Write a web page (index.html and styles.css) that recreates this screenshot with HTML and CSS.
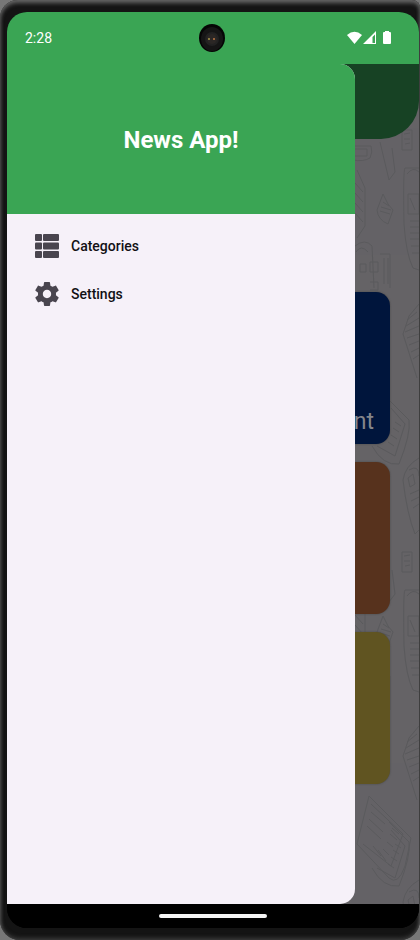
FILE: index.html
```html
<!DOCTYPE html>
<html lang="en">
<head>
<meta charset="utf-8">
<meta name="viewport" content="width=device-width, initial-scale=1">
<title>News App</title>
<link rel="stylesheet" href="styles.css">
</head>
<body>
<div class="phone">
  <div class="screen">
    <header class="status">
      <time class="clock">2:28</time>
      <span class="camera"><svg viewBox="0 0 26 28"><ellipse cx="13" cy="14" rx="13" ry="14" fill="#050505"/><ellipse cx="13" cy="15" rx="11" ry="12" fill="#151515"/><circle cx="13" cy="15" r="7" fill="#222"/><circle cx="13" cy="15" r="5" fill="#2b2725"/><circle cx="10" cy="15" r="1" fill="#a79a4a"/><circle cx="15" cy="15" r="1" fill="#c07845"/></svg></span>
      <svg class="signals" viewBox="0 0 46 14" fill="#fff">
        <path d="M0 4Q7.500-2.500 15 4L7.500 13Z"/>
        <path fill-rule="evenodd" d="M29 0V13H16ZM28 3.500L25.500 6V12H28Z"/>
        <path d="M37 1H38V0H42V1H43Q44 1 44 2V12Q44 13 43 13H37Q36 13 36 12V2Q36 1 37 1Z"/>
      </svg>
    </header>

    <div class="content">
      <main class="page">
        <svg class="doodles" viewBox="0 0 66 840" preserveAspectRatio="xMaxYMin slice" fill="none" stroke="#505254" stroke-width="1">
          <defs>
            <g id="sheets">
              <path d="M0 82H18Q20 88 17 94Q10 98 0 96M2 85H14V92H2M27 78L36 116L42 108L39 84M49 66H59V86H49ZM51 70L57 69M51 75H57M52 80L57 79M4 106L12 124V162L4 174M2 119L10 128M2 129L10 138M2 139L10 148M2 149L10 158M66 104H52Q50 106 51 160Q53 190 60 204L66 206M54 110Q60 102 66 108M55 130H66V150H55ZM57 134L62 146M57 157H66M57 163H66M57 169H66M57 175H66M58 182H66M59 189H66"/>
              <path d="M30 130L24 146Q25 156 35 160L40 146L35 140L30 130M27 147L37 150M28 143L38 146M30 138L36 142M2 182Q12 174 19 182L21 224M7 200H13V208H7ZM17 198H25V208H17ZM27 190H37V224M31 194V220M35 194V220M17 218H25V226H17M3 188Q8 180 15 188"/>
            </g>
            <g id="papers">
              <path d="M66 240L56 252L50 270L64 314M54 256L64 248M53 262L66 254M52 268L66 262M54 274L66 270M56 281L66 277M58 288L66 284M60 295L66 291M36 336L56 356Q58 370 46 400Q30 402 19 382M38 344L52 360L42 392L24 382M42 358L48 362M40 364L46 368M38 371L44 375M35 378L41 382"/>
              <path d="M66 394Q52 402 50 416Q54 450 62 470L66 466M56 406Q66 400 66 412M55 414L60 410L62 420L57 423ZM57 430L66 426M58 437L66 433M60 444L66 440"/>
            </g>
          </defs>
          <use href="#sheets"/><use href="#papers"/>
          <use href="#sheets" y="422"/>
          <use href="#papers" y="422"/>
          <path d="M16 732L58 774L52 802Q45 822 36 814L4 780ZM18 740L50 770L38 802L10 780M18 748L32 760M16 755L30 768M14 762L28 775M39 764L46 770M37 770L44 776M34 778L40 783M30 785L36 791M25 786L33 797M20 782L28 792"/>
        </svg>
        <div class="appbar"></div>
        <div class="cards">
          <article class="card card-blue">Entertainment</article>
          <article class="card card-brown"></article>
          <article class="card card-olive"></article>
        </div>
      </main>

      <aside class="drawer">
        <h1 class="title">News App!</h1>
        <nav class="menu">
          <a class="item" href="#categories">
            <svg class="icon" viewBox="0 0 24 24" fill="#49454f"><rect width="7" height="7" rx="1"/><rect x="8" width="16" height="7" rx="1"/><rect y="8.500" width="7" height="7" rx="1"/><rect x="8" y="8.500" width="16" height="7" rx="1"/><rect y="17" width="7" height="7" rx="1"/><rect x="8" y="17" width="16" height="7" rx="1"/></svg>
            Categories
          </a>
          <a class="item" href="#settings">
            <svg class="icon" viewBox="2 2 20 20" fill="#49454f"><path d="M19.430 12.980c.04-.32.07-.64.07-.98s-.03-.66-.07-.98l2.110-1.650c.19-.15.24-.42.12-.64l-2-3.460c-.12-.22-.39-.3-.61-.22l-2.490 1c-.52-.4-1.080-.73-1.690-.98l-.38-2.650C14.460 2.180 14.250 2 14 2h-4c-.25 0-.46.18-.49.42l-.38 2.650c-.61.25-1.170.59-1.690.98l-2.490-1c-.23-.09-.49 0-.61.22l-2 3.460c-.13.22-.07.49.12.64l2.110 1.650c-.04.32-.07.65-.07.98s.03.66.07.98l-2.110 1.650c-.19.15-.24.42-.12.64l2 3.460c.12.22.39.3.61.22l2.490-1c.52.4 1.080.73 1.690.98l.38 2.650c.03.24.24.42.49.42h4c.25 0 .46-.18.49-.42l.38-2.650c.61-.25 1.170-.59 1.690-.98l2.490 1c.23.09.49 0 .61-.22l2-3.460c.12-.22.07-.49-.12-.64l-2.110-1.650zM12 15.500c-1.930 0-3.500-1.570-3.500-3.500s1.570-3.500 3.500-3.500 3.500 1.570 3.500 3.500-1.570 3.500-3.500 3.500z"/></svg>
            Settings
          </a>
        </nav>
      </aside>
    </div>

    <footer class="gesture"><span class="handle"></span></footer>
  </div>
</div>
</body>
</html>
```
FILE: styles.css
```css
* { box-sizing: border-box; }

body {
  margin: 0;
  background: #777;
  font-family: Roboto, "Liberation Sans", sans-serif;
}

.phone {
  display: flex;
  min-height: 100vh;
  padding: 12px 1px 12px 7px;
  background: #141414;
  border-radius: 18px 8px 20px 20px;
  box-shadow: inset 0 3px 4px #666, inset 0 -2px 4px #3a3a3a;
}

.screen {
  flex: 1;
  display: flex;
  flex-direction: column;
  overflow: hidden;
  border-radius: 20px;
  background: #000;
}

.status {
  display: grid;
  grid-template-columns: 1fr auto 1fr;
  align-items: center;
  height: 52px;
  padding: 0 26px 0 18px;
  background: #3aa554;
  color: #fff;
}

.clock { font-size: 14px; }

.camera {
  width: 26px;
  height: 28px;
  margin-left: 6px;
}

.camera svg { display: block; }

.signals {
  width: 46px;
  height: 14px;
  justify-self: end;
}

.content {
  position: relative;
  flex: 1;
  display: flex;
}

.page {
  position: relative;
  flex: 1;
  background: #656366;
}

.doodles {
  position: absolute;
  top: 0;
  right: 0;
  width: 66px;
  height: 100%;
  opacity: 0.5;
}

.appbar {
  position: relative;
  height: 75px;
  background: #174224;
  border-radius: 0 0 38px 38px;
}

.cards {
  position: relative;
  display: flex;
  flex-direction: column;
  gap: 18px;
  padding: 153px 29px 0;
}

.card {
  display: flex;
  align-items: flex-end;
  justify-content: flex-end;
  height: 152px;
  padding: 8px 16px;
  border-radius: 14px;
  box-shadow: 0 0 2px #444;
  color: #85868b;
  font-size: 23px;
  line-height: 28px;
}

.card-blue { background: #00153c; }
.card-brown { background: #57321d; }
.card-olive { background: #605421; }

.drawer {
  position: absolute;
  inset: 0 64px 0 0;
  overflow: hidden;
  background: #f6f1f9;
  border-radius: 0 15px 15px 0;
}

.title {
  display: flex;
  align-items: center;
  justify-content: center;
  height: 150px;
  margin: 0;
  padding-top: 2px;
  background: #3aa554;
  color: #fff;
  font-size: 24px;
  font-weight: 700;
}

.menu {
  display: flex;
  flex-direction: column;
  padding: 8px 12px;
}

.item {
  display: flex;
  align-items: center;
  gap: 12px;
  height: 48px;
  padding: 0 16px;
  color: #111014;
  font-size: 14px;
  font-weight: 500;
  text-decoration: none;
}

.icon {
  width: 24px;
  height: 24px;
}

.gesture {
  display: flex;
  align-items: center;
  justify-content: center;
  height: 24px;
  background: #000;
}

.handle {
  width: 108px;
  height: 4px;
  border-radius: 2px;
  background: #f4f4f4;
}
```
